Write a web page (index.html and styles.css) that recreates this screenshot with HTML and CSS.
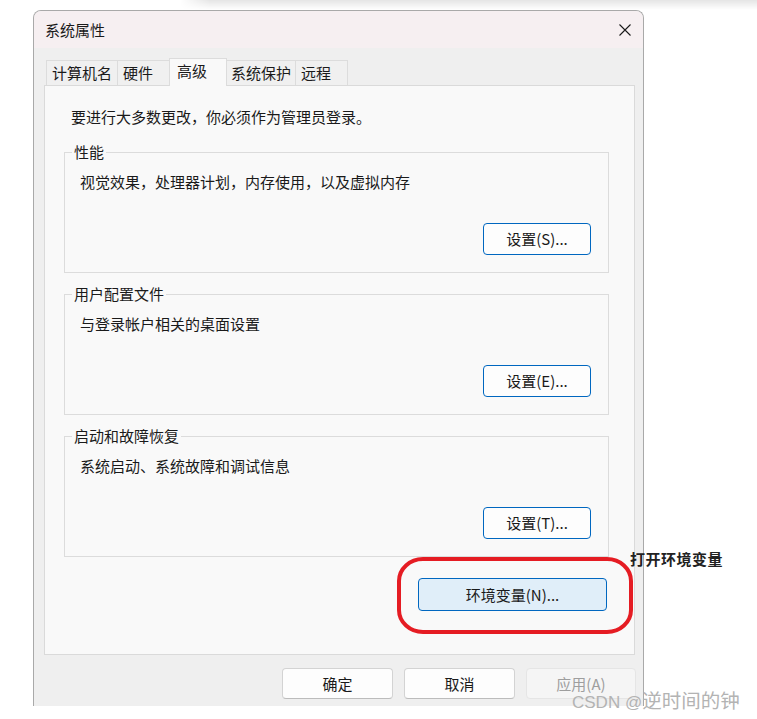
FILE: index.html
```html
<!DOCTYPE html>
<html lang="zh-CN">
<head>
<meta charset="utf-8">
<title>系统属性</title>
<link rel="stylesheet" href="styles.css">
</head>
<body>
<div class="topshade"></div>
<div class="window">
  <div class="titlebar">
    <span class="title">系统属性</span>
    <svg class="close" width="12" height="12" viewBox="0 0 12 12"><path d="M0.5 0.5 L11.5 11.5 M11.5 0.5 L0.5 11.5" stroke="#1a1a1a" stroke-width="1.1" fill="none"/></svg>
  </div>
  <div class="tabs">
    <div class="tab t1">计算机名</div>
    <div class="tab t2">硬件</div>
    <div class="tab t3 active">高级</div>
    <div class="tab t4">系统保护</div>
    <div class="tab t5">远程</div>
  </div>
  <div class="panel">
    <p class="note">要进行大多数更改，你必须作为管理员登录。</p>
    <fieldset class="group">
      <legend>性能</legend>
      <div class="gbody">
        <div class="desc">视觉效果，处理器计划，内存使用，以及虚拟内存</div>
        <div class="brow"><button class="btn set">设置(S)...</button></div>
      </div>
    </fieldset>
    <fieldset class="group">
      <legend>用户配置文件</legend>
      <div class="gbody">
        <div class="desc">与登录帐户相关的桌面设置</div>
        <div class="brow"><button class="btn set">设置(E)...</button></div>
      </div>
    </fieldset>
    <fieldset class="group">
      <legend>启动和故障恢复</legend>
      <div class="gbody">
        <div class="desc">系统启动、系统故障和调试信息</div>
        <div class="brow"><button class="btn set">设置(T)...</button></div>
      </div>
    </fieldset>
    <div class="envrow"><button class="btn env">环境变量(N)...</button></div>
  </div>
  <div class="footer">
    <button class="btn fbtn">确定</button>
    <button class="btn fbtn">取消</button>
    <button class="btn fbtn disabled">应用(A)</button>
  </div>
</div>
<svg class="mark" width="240" height="84" viewBox="0 0 240 84"><rect x="4" y="4" width="232" height="73" rx="24" ry="22" fill="none" stroke="#e51c23" stroke-width="4"/></svg>
<div class="callout">打开环境变量</div>
<div class="watermark"><span class="wl">CSDN @</span><span class="wc">逆时间的钟</span></div>
</body>
</html>
```
FILE: styles.css
```css
* { box-sizing: border-box; }
html, body { margin: 0; padding: 0; }
body {
  width: 757px;
  height: 719px;
  overflow: hidden;
  position: relative;
  background: #ffffff;
  font-family: "Noto Sans CJK SC", "Microsoft YaHei", sans-serif;
  font-size: 15px;
  line-height: 20px;
  color: #1a1a1a;
}
.topshade {
  height: 10px;
  margin-left: 180px;
  background: linear-gradient(to bottom, rgba(0,0,0,0.10), rgba(0,0,0,0));
  -webkit-mask-image: linear-gradient(to right, transparent, #000 30px);
  mask-image: linear-gradient(to right, transparent, #000 30px);
}
.window {
  margin-left: 33px;
  width: 611px;
  border: 1px solid #a9a9a9;
  border-bottom: none;
  border-radius: 8px 8px 0 0;
  background: #efefef;
  overflow: hidden;
}
.titlebar {
  height: 37px;
  background: #f6eff1;
  display: flex;
  align-items: center;
  justify-content: space-between;
  padding: 0 12px 0 11px;
}
.title { font-size: 15px; color: #1a1a1a; }
.close { display: block; }
.tabs {
  display: flex;
  align-items: flex-end;
  height: 27px;
  margin-top: 10px;
  margin-left: 12px;
  position: relative;
  z-index: 1;
}
.tab {
  height: 25px;
  border: 1px solid #dcdcdc;
  border-bottom: none;
  background: #f0f0f0;
  padding-left: 5px;
  line-height: 24px;
  margin-right: -1px;
  white-space: nowrap;
}
.t1 { width: 72px; }
.t2 { width: 54px; }
.t4 { width: 71px; }
.t5 { width: 53px; }
.tab.active {
  width: 58px;
  height: 28px;
  padding-left: 7px;
  background: #f9f9f9;
  line-height: 24px;
  margin-bottom: -1px;
  margin-left: -1px;
  margin-right: -2px;
  position: relative;
  z-index: 2;
}
.panel {
  margin-left: 10px;
  width: 591px;
  border: 1px solid #dadada;
  background: #f9f9f9;
  padding: 21px 25px 43px 19px;
}
.note { margin: 0 0 15px 7px; }
.group {
  border: 1px solid #dcdcdc;
  margin: 0 0 11px 0;
  padding: 0;
  min-width: 0;
  width: 545px;
}
.group legend {
  margin-left: 7px;
  padding: 0 2px;
  line-height: 20px;
}
.gbody { padding: 10px 17px 17px 15px; }
.brow { display: flex; justify-content: flex-end; margin-top: 31px; }
.btn {
  font-family: inherit;
  font-size: 15px;
  line-height: 20px;
  color: #1a1a1a;
  border-radius: 4px;
  padding: 0;
  margin: 0;
  background: #fdfdfd;
  border: 1px solid #0067c0;
}
.set { width: 108px; height: 32px; }
.envrow { display: flex; justify-content: flex-end; padding-right: 2px; margin-top: 21px; }
.env { width: 189px; height: 33px; background: #e0eef9; }
.footer {
  display: flex;
  justify-content: flex-end;
  gap: 11px;
  padding: 13px 7px 7px 0;
}
.fbtn {
  width: 111px;
  height: 31px;
  border: 1px solid #d3d3d3;
  border-bottom-color: #bcbcbc;
}
.fbtn.disabled {
  width: 110px;
  background: #f5f5f5;
  border-color: #e5e5e5;
  color: #9e9e9e;
}
.mark { position: absolute; left: 395px; top: 555px; }
.callout {
  position: absolute;
  left: 630px;
  top: 549px;
  font-weight: bold;
  font-size: 15px;
  letter-spacing: 0.5px;
  color: #222;
}
.watermark {
  position: absolute;
  left: 572px;
  top: 688px;
  color: #b3b3b3;
  white-space: nowrap;
  line-height: 24px;
}
.wl { font-family: "Liberation Sans", Arial, sans-serif; font-size: 17px; }
.wc { font-size: 19.5px; }
```
